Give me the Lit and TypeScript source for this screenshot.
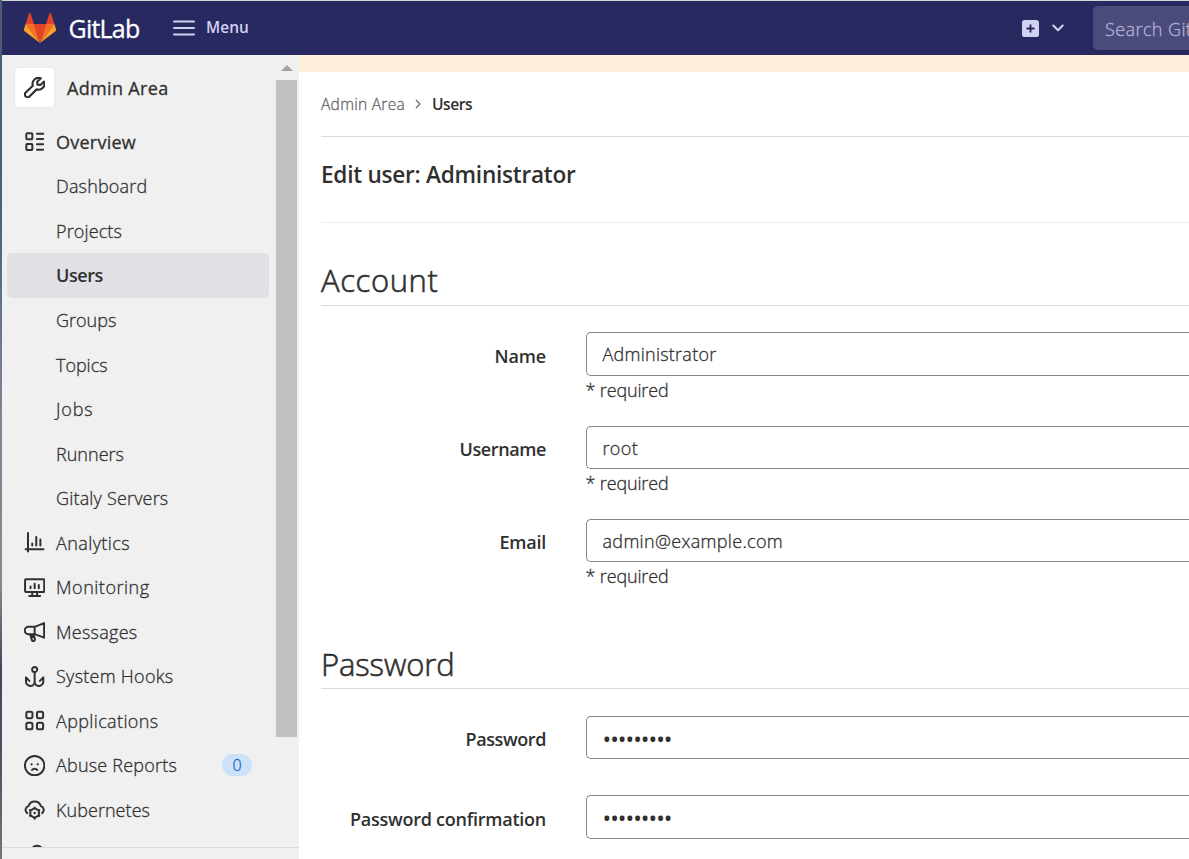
import { LitElement, html, css, svg, nothing, SVGTemplateResult } from "lit";
import { customElement, property, query } from "lit/decorators.js";

/** A single line of text whose tracking is adjusted to fill a given width. */
@customElement("fit-text")
class FitText extends LitElement {
  static styles = css`
    :host { display: inline-block; white-space: pre; }
    .run { display: inline-block; }
  `;
  @property() text = "";
  @property({ type: Number }) w = 0;
  @query(".run") run!: HTMLElement;

  updated() {
    this.run.style.letterSpacing = "0";
    const natural = this.run.getBoundingClientRect().width;
    const n = [...this.text].length;
    if (this.w && n) this.run.style.letterSpacing = `${(this.w - natural) / n}px`;
  }
  render() {
    return html`<span class="run">${this.text}</span>`;
  }
}

const fit = (text: string, w: number) => html`<fit-text .text=${text} .w=${w}></fit-text>`;

const icons: Record<string, SVGTemplateResult> = {
  wrench: svg`<path stroke-width="1.6" stroke-linejoin="round" d="M12.600 1A4.500 4.500 0 0 0 6.600 6.500L1.300 11.700A1.900 1.900 0 0 0 4.100 14.600L9.500 9.300A4.500 4.500 0 0 0 15.100 3.400L12.400 6 10.200 5.700 9.900 3.600Z"/>`,
  overview: svg`<rect x="1.75" y="1.75" width="4.5" height="4.5" rx=".6"/><rect x="1.75" y="9.75" width="4.5" height="4.5" rx=".6"/><path stroke-linecap="round" d="M9.75 2H14.4M9.75 6H14.4M9.75 10H14.4M9.75 14H14.4"/>`,
  analytics: svg`<path stroke-linecap="round" d="M3 .75V14.6M1.2 13H14.6M6.2 8.7V10.2M9.2 3.8V10.2M12.3 5.6V10.2"/>`,
  monitoring: svg`<rect x=".8" y="1.75" width="14.4" height="9.5" rx=".6"/><path stroke-linecap="round" d="M4.9 7.2V8.4M8 5V8.4M11.1 6V8.4M3.9 14.3H12.1"/><path d="M6.2 11.5V14M9.8 11.5V14"/>`,
  messages: svg`<path stroke-linejoin="round" d="M8 4.400 15.100 1.600V12.500L8 9.900H3.300A2.700 2.700 0 0 1 3.300 4.400ZM8 4.400V9.900"/><path stroke-linejoin="round" d="M4.600 10 5.900 14.200A1.100 1.100 0 0 0 8.100 13.600L7.300 10M5.800 10 6.600 12.800"/>`,
  hooks: svg`<circle cx="8" cy="2.700" r="1.900"/><path stroke-linecap="round" stroke-linejoin="round" d="M8 5V12.400M1.500 8.600V11.600A3.250 3.100 0 0 0 8 12.100 3.250 3.100 0 0 0 14.500 11.600V8.600M1.500 8.600 4 11.200M14.500 8.600 12 11.200"/>`,
  applications: svg`<rect x="1.75" y="1.25" width="4.6" height="4.9" rx="1.2"/><rect x="9.75" y="1.25" width="4.6" height="4.9" rx="1.2"/><rect x="1.75" y="9.6" width="4.6" height="4.9" rx="1.2"/><rect x="9.75" y="9.6" width="4.6" height="4.9" rx="1.2"/>`,
  abuse: svg`<circle cx="8" cy="8" r="7.3"/><path stroke-linecap="round" d="M6.1 11.2C7 10 9 10 9.9 11.2"/><path stroke-linecap="round" stroke-width="1.7" d="M5.7 7h.01M10.3 7h.01"/>`,
  kubernetes: svg`<path stroke-linecap="round" d="M2.400 10.600A3 3 0 0 1 3.400 5.300 4.800 4.800 0 0 1 12.600 5.300 3 3 0 0 1 13.600 10.600"/><path d="M8 6.900 11.200 8.700V12.300L8 14.100 4.800 12.300V8.700Z"/><path stroke-width="1.200" d="M8 5.900V7.500M8 13.600V15.600M3.900 8l1.300.8M12.100 8l-1.300.8M3.900 13l1.300-.8M12.100 13l-1.300-.8"/><circle cx="8" cy="10.500" r=".9" fill="currentColor" stroke="none"/>`,
  geo: svg`<circle cx="9.800" cy="6.200" r="4.800"/>`,
};

const icon = (name: string) =>
  html`<svg class="icon" viewBox="0 0 16 16" fill="none" stroke="currentColor" stroke-width="1.5">${icons[name]}</svg>`;

interface Item { text: string; w: number; icon?: string; kind?: string; badge?: string }

const nav: Item[] = [
  { text: "Overview", w: 80, icon: "overview", kind: "strong" },
  { text: "Dashboard", w: 91.3 },
  { text: "Projects", w: 66 },
  { text: "Users", w: 46.8, kind: "active" },
  { text: "Groups", w: 60.4 },
  { text: "Topics", w: 51.5 },
  { text: "Jobs", w: 37.5 },
  { text: "Runners", w: 68 },
  { text: "Gitaly Servers", w: 112.4 },
  { text: "Analytics", w: 74, icon: "analytics" },
  { text: "Monitoring", w: 93.6, icon: "monitoring" },
  { text: "Messages", w: 81.5, icon: "messages" },
  { text: "System Hooks", w: 117.4, icon: "hooks" },
  { text: "Applications", w: 102.5, icon: "applications" },
  { text: "Abuse Reports", w: 121, icon: "abuse", badge: "0" },
  { text: "Kubernetes", w: 94, icon: "kubernetes" },
  { text: "", w: 0, icon: "geo" },
];

interface Field { label: string; lw: number; value: string; vw: number; secret?: boolean }

const account: Field[] = [
  { label: "Name", lw: 51.5, value: "Administrator", vw: 114 },
  { label: "Username", lw: 86.5, value: "root", vw: 35.5 },
  { label: "Email", lw: 46.5, value: "admin@example.com", vw: 180.5 },
];
const password: Field[] = [
  { label: "Password", lw: 80.5, value: "•••••••••", vw: 69, secret: true },
  { label: "Password confirmation", lw: 196, value: "•••••••••", vw: 69, secret: true },
];

@customElement("app-root")
class AppRoot extends LitElement {
  static styles = css`
    :host {
      display: flex; width: 1189px; height: 859px; overflow: hidden; box-sizing: border-box;
      background: #fff; color: #303030; font: 300 18px/24px "Open Sans", "Noto Sans", sans-serif;
      -webkit-text-stroke: 0.3px currentColor;
    }
    * { box-sizing: border-box; }
    svg { flex: none; }
    .edge { flex: none; width: 2px; background: linear-gradient(#4a5d76 0, #4a6080 25%, #788292 45%, #858b94 68%, #3d4859 78%, #4d5766 90%, #74767c 100%); }
    .window { flex: 1; min-width: 0; display: flex; flex-direction: column; border-top: 1px solid #d5d8da; }
    .topbar { flex: none; height: 54px; background: #292961; display: flex; align-items: center; padding-left: 21px; color: #d1d1f0; }
    .logo { width: 34px; height: 32px; margin-top: -1px; }
    .brand { flex: none; width: 75px; margin-left: 11.5px; color: #fff; font-size: 25px; line-height: 34px; font-weight: 400; margin-top: -1px; }
    .burger { width: 22px; height: 16px; margin-left: 29.5px; }
    .menu { flex: none; margin-left: 11px; width: 60px; font-weight: 600; font-size: 15.4px; -webkit-text-stroke: 0; }
    .plus { width: 17px; height: 17px; margin-left: 756px; }
    .chev { width: 12px; height: 8px; margin-left: 13px; }
    .search { flex: none; width: 180px; height: 44px; margin-left: 28.5px; border-radius: 5px; background: #4b4b7b; color: #b3b3d4; padding: 11px 12.5px; }
    .body { flex: 1; min-height: 0; display: flex; }
    .sidebar { flex: none; width: 297px; background: #f0f0f0; display: flex; flex-direction: column; }
    .scroller { height: 792px; display: flex; overflow: hidden; }
    .list { width: 274px; padding: 12px 7px 0 5px; }
    .context { display: flex; align-items: center; height: 41px; padding-left: 7px; margin-bottom: 11.5px; font-weight: 400; }
    .tile { width: 41px; height: 41px; border-radius: 4px; background: #fff; border: 1px solid #eaeaea; display: grid; place-items: center; margin-right: 12px; }
    .item { display: flex; align-items: center; height: 44.55px; padding: 0 17px; border-radius: 5px; }
    .slot { width: 21px; height: 21px; margin-right: 11px; }
    .icon { width: 21.3px; height: 21.3px; display: block; }
    .strong { font-weight: 400; }
    .active { background: #e1e0e5; font-weight: 600; -webkit-text-stroke: 0; }
    .badge { margin-left: auto; width: 30px; height: 22px; border-radius: 11px; background: #cbe2f9; color: #1068bf; font-size: 16px; line-height: 22px; text-align: center; }
    .scrollbar { width: 21px; display: flex; flex-direction: column; align-items: center; }
    .arrow { width: 12px; height: 6px; margin: 10px 0 9px; }
    .thumb { flex: none; width: 21px; height: 657px; background: #c1c1c1; }
    .foot { flex: 1; border-top: 1px solid #dbdbdb; }
    .main { flex: 1; min-width: 0; }
    .notice { height: 17px; background: #fdefdc; }
    .content { margin-left: 22px; }
    .crumbs { height: 65px; border-bottom: 1px solid #dbdbdb; display: flex; align-items: center; font-size: 15.6px; color: #666; }
    .crumbs svg { width: 6px; height: 10px; margin: 0 11px 0 10px; }
    .here { color: #303030; font-weight: 600; -webkit-text-stroke: 0; }
    .title { height: 86px; margin: 0; padding-top: 22px; border-bottom: 1px solid #eee; font-size: 22.6px; line-height: 32px; font-weight: 600; -webkit-text-stroke: 0; }
    .legend { margin: 0; border-bottom: 1px solid #dbdbdb; font-size: 31px; line-height: 47px; height: 48px; -webkit-text-stroke: 0.6px currentColor; }
    .first { margin-top: 35px; margin-bottom: 26.3px; line-height: 45px; }
    .second { margin-top: 28.800px; margin-bottom: 27px; }
    .field { display: grid; grid-template-columns: 225px 1fr; column-gap: 39.500px; height: 93.3px; }
    .short { height: 79.5px; }
    .label { text-align: right; font-weight: 600; padding-top: 11.500px; -webkit-text-stroke: 0; white-space: nowrap; }
    .input { height: 43.5px; border: 1.5px solid #868686; border-right: 0; border-radius: 5px 0 0 5px; padding: 9px 16px; }
    .secret { font-size: 23px; padding-top: 10px; font-weight: 400; -webkit-text-stroke: 0; }
    .hint { margin-top: 2px; }
  `;

  item(i: Item) {
    return html`<div class="item ${i.kind ?? ""}">
      <div class="slot">${i.icon ? icon(i.icon) : nothing}</div>
      ${fit(i.text, i.w)}
      ${i.badge ? html`<span class="badge">${i.badge}</span>` : nothing}
    </div>`;
  }

  field(f: Field) {
    return html`<div class="field ${f.secret ? "short" : ""}">
      <div class="label">${fit(f.label, f.lw)}</div>
      <div>
        <div class="input ${f.secret ? "secret" : ""}">${fit(f.value, f.vw)}</div>
        ${f.secret ? nothing : html`<div class="hint">${fit("* required", 83)}</div>`}
      </div>
    </div>`;
  }

  render() {
    return html`
      <div class="edge"></div>
      <div class="window">
        <header class="topbar">
          <svg class="logo" viewBox="0 0 34 32">
            <path fill="#e24329" d="M17 31 23 12H11z"/>
            <path fill="#fc6d26" d="M17 31 11 12H2.6zM17 31 23 12H31.4z"/>
            <path fill="#fca326" d="M2.6 12 .9 17.6a1.2 1.2 0 0 0 .4 1.3L17 31zM31.4 12 33.1 17.6a1.2 1.2 0 0 1-.4 1.3L17 31z"/>
            <path fill="#e24329" d="M2.6 12H11L7.400 1.200C7.200.6 6.400.6 6.200 1.200zM31.400 12H23L26.600 1.200C26.800.6 27.600.6 27.800 1.200z"/>
          </svg>
          <span class="brand">${fit("GitLab", 71)}</span>
          <svg class="burger" viewBox="0 0 22 16" stroke="#d1d1f0" stroke-width="2" stroke-linecap="round"><path d="M1 1.500H21M1 8H21M1 14.500H21"/></svg>
          <span class="menu">${fit("Menu", 43)}</span>
          <svg class="plus" viewBox="0 0 18 18"><rect width="18" height="18" rx="3" fill="#d1d1f0"/><path d="M9 5.500V12.500M5.500 9H12.500" stroke="#292961" stroke-width="2" stroke-linecap="round"/></svg>
          <svg class="chev" viewBox="0 0 12 8" fill="none" stroke="#d1d1f0" stroke-width="2" stroke-linecap="round" stroke-linejoin="round"><path d="M1.300 1.500 6 6.200 10.700 1.500"/></svg>
          <div class="search">${fit("Search GitLab", 118)}</div>
        </header>
        <div class="body">
          <nav class="sidebar">
            <div class="scroller">
              <div class="list">
                <div class="context"><div class="tile">${icon("wrench")}</div>${fit("Admin Area", 101.5)}</div>
                ${nav.map((i) => this.item(i))}
              </div>
              <div class="scrollbar">
                <svg class="arrow" viewBox="0 0 12 6"><path d="M0 6 6 0 12 6z" fill="#a3a3a3"/></svg>
                <div class="thumb"></div>
              </div>
            </div>
            <div class="foot"></div>
          </nav>
          <main class="main">
            <div class="notice"></div>
            <div class="content">
              <div class="crumbs">
                ${fit("Admin Area", 84)}
                <svg viewBox="0 0 6 10" fill="none" stroke="#777" stroke-width="1.500"><path d="M1 1 4.800 5 1 9"/></svg>
                <span class="here">${fit("Users", 40)}</span>
              </div>
              <h3 class="title">${fit("Edit user: Administrator", 254.5)}</h3>
              <div class="legend first">${fit("Account", 117.5)}</div>
              ${account.map((f) => this.field(f))}
              <div class="legend second">${fit("Password", 133.5)}</div>
              ${password.map((f) => this.field(f))}
            </div>
          </main>
        </div>
      </div>
    `;
  }
}
